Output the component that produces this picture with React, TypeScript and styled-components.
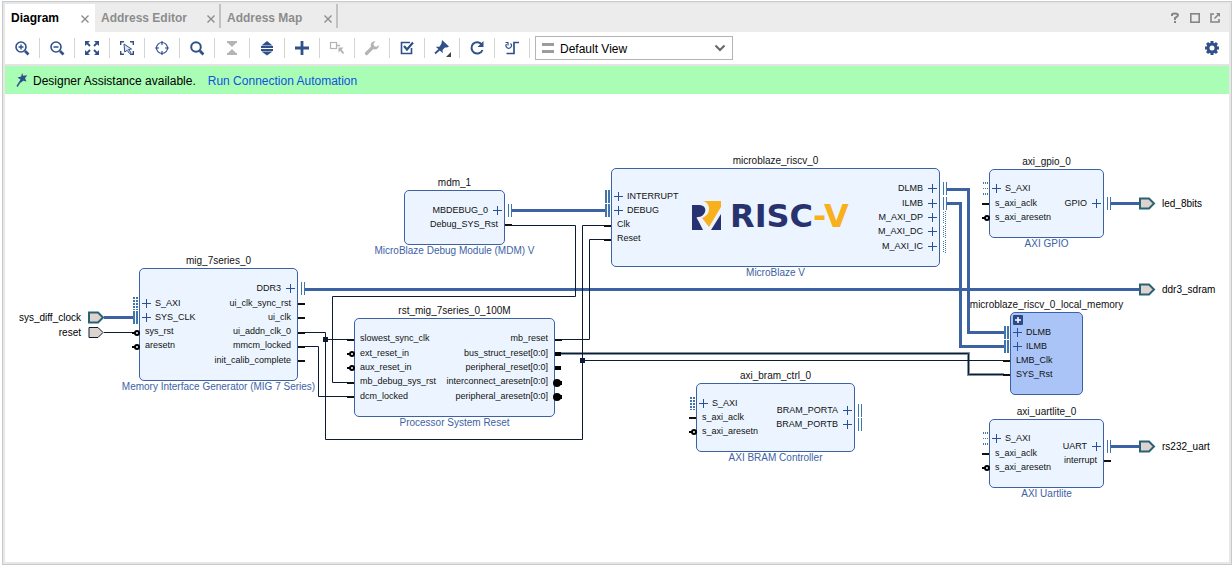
import React from "react";
import styled, { createGlobalStyle, css } from "styled-components";

const BLUE = "#3d62a4";
const BUS = "#3f76ad";
const DARK = "#0d1c33";
const ICON = "#30508a";

const GlobalStyle = createGlobalStyle`
  * { box-sizing: border-box; }
  body {
    margin: 0;
    background: #fff;
    color: #000;
    font-family: "Liberation Sans", Arial, sans-serif;
    font-size: 12px;
  }
`;

/* ---------- window frame ---------- */

const Page = styled.div`
  display: flex;
  min-height: 100vh;
  padding: 1px 0 1px 2px;
`;

const Frame = styled.main`
  flex: 1;
  min-width: 0;
  display: flex;
  flex-direction: column;
  border: 1px solid #c9cbcb;
  padding: 2px;
  background: #e7e7e7;
`;

const TabBar = styled.header`
  display: flex;
  height: 28px;
  background: #ececec;
`;

const Tab = styled.div<{ $width: number; $active?: boolean }>`
  display: flex;
  align-items: center;
  justify-content: space-between;
  width: ${(p) => p.$width}px;
  padding: 0 4px 0 6px;
  ${(p) =>
    p.$active
      ? css`
          padding-right: 6px;
          background: #fff;
          color: #000;
        `
      : css`
          height: 24px;
          padding-top: 4px;
          border-right: 2px solid #c2c2c2;
          color: #8c8c8c;
        `}
`;

const TabLabel = styled.button`
  border: 0;
  padding: 0;
  background: none;
  color: inherit;
  font: bold 12px "Liberation Sans", Arial, sans-serif;
`;

const CloseButton = styled.button`
  display: flex;
  border: 0;
  padding: 2px 0 0;
  background: none;
  color: #8c8c8c;
`;

const WindowButtons = styled.div`
  display: flex;
  align-items: center;
  gap: 4px;
  margin-left: auto;
  padding-right: 6px;
`;

const PlainButton = styled.button<{ $strong?: boolean }>`
  display: flex;
  border: 0;
  padding: 0;
  background: none;
  color: ${(p) => (p.$strong ? ICON : "#858585")};
`;

/* ---------- toolbar ---------- */

const Toolbar = styled.div`
  display: flex;
  align-items: center;
  height: 32px;
  padding-right: 9px;
  background: #fff;
`;

const ToolButton = styled.button<{ $muted?: boolean }>`
  display: flex;
  align-items: center;
  justify-content: center;
  width: 35px;
  height: 20px;
  border: 0;
  border-right: 1px solid #d4d4d4;
  padding: 0;
  background: none;
  color: ${(p) => (p.$muted ? "#b4b4b4" : ICON)};
`;

const ViewPicker = styled.label`
  display: grid;
  align-items: center;
  width: 198px;
  height: 24px;
  margin-left: 5px;
  margin-right: auto;
  > * {
    grid-area: 1 / 1;
  }
  > svg {
    pointer-events: none;
    margin: 0 7px;
  }
  > svg:last-child {
    justify-self: end;
  }
`;

const ViewSelect = styled.select`
  width: 100%;
  height: 100%;
  appearance: none;
  border: 1px solid #b4b4b4;
  border-radius: 0;
  padding: 2px 24px 0;
  background: #fff;
  color: #000;
  font: 12px "Liberation Sans", Arial, sans-serif;
`;

const Assistance = styled.div`
  display: flex;
  align-items: center;
  gap: 4px;
  height: 30px;
  border-top: 2px solid #e4e4e4;
  padding: 2px 8px 0;
  background: #aafdb4;
  svg {
    color: #30508a;
  }
`;

const AssistanceLink = styled.a`
  margin-left: 8px;
  color: #1152e0;
  text-decoration: none;
`;

/* ---------- diagram ---------- */

const Canvas = styled.section`
  position: relative;
  flex: 1;
  min-height: 440px;
  overflow: hidden;
  background: #fff;
`;

const WireLayer = styled.svg`
  position: absolute;
  inset: 0;
  width: 100%;
  height: 100%;
  pointer-events: none;
`;

const Block = styled.div<{ $x: number; $y: number; $w: number; $h: number; $hier?: boolean }>`
  position: absolute;
  left: ${(p) => p.$x - 5}px;
  top: ${(p) => p.$y - 94}px;
  width: ${(p) => p.$w}px;
  height: ${(p) => p.$h}px;
  border: 1px solid ${BLUE};
  border-radius: 5px;
  background: ${(p) => (p.$hier ? "#abc4f8" : "#ecf5ff")};
`;

const Caption = styled.div<{ $below?: boolean }>`
  position: absolute;
  left: 50%;
  transform: translateX(-50%);
  white-space: nowrap;
  font-size: 10px;
  line-height: 12px;
  ${(p) =>
    p.$below
      ? `top: 100%; padding-top: 1px; color: ${BLUE};`
      : "bottom: 100%; padding-bottom: 2px; color: #111;"}
`;

const PinLabel = styled.div<{ $y: number; $right?: boolean; $bus?: boolean }>`
  position: absolute;
  top: ${(p) => p.$y - 7}px;
  ${(p) => (p.$right ? "right" : "left")}: ${(p) => (p.$bus ? 2 : p.$right ? 6 : 5)}px;
  display: flex;
  flex-direction: ${(p) => (p.$right ? "row-reverse" : "row")};
  align-items: center;
  gap: ${(p) => (p.$right ? 5 : 4)}px;
  height: 12px;
  white-space: nowrap;
  font-size: 9px;
  line-height: 12px;
  color: #111;
`;

const PortLabel = styled.div<{ $x: number; $y: number; $end?: boolean }>`
  position: absolute;
  left: ${(p) => p.$x - 5}px;
  top: ${(p) => p.$y - 100}px;
  font-size: 10px;
  line-height: 12px;
  white-space: nowrap;
  ${(p) => p.$end && "transform: translateX(-100%);"}
`;

const Logo = styled.div`
  position: absolute;
  left: 80px;
  top: 32px;
  display: flex;
  align-items: center;
  gap: 8px;
`;

const Wordmark = styled.span`
  font: bold 32px "DejaVu Sans", sans-serif;
  line-height: 30px;
  color: #28326f;
  b {
    color: #f8b01c;
  }
`;

const Expander = styled.button`
  position: absolute;
  left: 2px;
  top: 2px;
  display: flex;
  border: 0;
  padding: 0;
  background: none;
`;

type Kind = "bus" | "dots" | "sparse" | "wire" | "vector" | "not" | "notvector";
interface Pin {
  label: string;
  y: number;
  kind: Kind;
  right?: boolean;
}
interface BlockData {
  name: string;
  type?: string;
  x: number;
  y: number;
  w: number;
  h: number;
  pins: Pin[];
}

const L = (label: string, y: number, kind: Kind = "wire"): Pin => ({ label, y, kind });
const R = (label: string, y: number, kind: Kind = "wire"): Pin => ({ label, y, kind, right: true });

const blocks: BlockData[] = [
  {
    name: "mdm_1", type: "MicroBlaze Debug Module (MDM) V", x: 404, y: 190, w: 101, h: 55,
    pins: [R("MBDEBUG_0", 20, "bus"), R("Debug_SYS_Rst", 34)],
  },
  {
    name: "mig_7series_0", type: "Memory Interface Generator (MIG 7 Series)", x: 139, y: 268, w: 159, h: 113,
    pins: [
      L("S_AXI", 35, "dots"), L("SYS_CLK", 49, "bus"), L("sys_rst", 63, "not"), L("aresetn", 77, "not"),
      R("DDR3", 20, "bus"), R("ui_clk_sync_rst", 35), R("ui_clk", 49), R("ui_addn_clk_0", 63),
      R("mmcm_locked", 77), R("init_calib_complete", 92),
    ],
  },
  {
    name: "rst_mig_7series_0_100M", type: "Processor System Reset", x: 354, y: 318, w: 201, h: 99,
    pins: [
      L("slowest_sync_clk", 20), L("ext_reset_in", 35, "not"), L("aux_reset_in", 49, "not"),
      L("mb_debug_sys_rst", 63), L("dcm_locked", 78),
      R("mb_reset", 20), R("bus_struct_reset[0:0]", 35, "vector"), R("peripheral_reset[0:0]", 49, "vector"),
      R("interconnect_aresetn[0:0]", 63, "notvector"), R("peripheral_aresetn[0:0]", 78, "notvector"),
    ],
  },
  {
    name: "microblaze_riscv_0", type: "MicroBlaze V", x: 611, y: 168, w: 329, h: 99,
    pins: [
      L("INTERRUPT", 28, "bus"), L("DEBUG", 42, "bus"), L("Clk", 56), L("Reset", 70),
      R("DLMB", 20, "bus"), R("ILMB", 35, "bus"), R("M_AXI_DP", 49, "dots"), R("M_AXI_DC", 63, "dots"), R("M_AXI_IC", 78, "dots"),
    ],
  },
  {
    name: "axi_gpio_0", type: "AXI GPIO", x: 989, y: 169, w: 115, h: 69,
    pins: [L("S_AXI", 19, "sparse"), L("s_axi_aclk", 34), L("s_axi_aresetn", 48, "not"), R("GPIO", 34, "bus")],
  },
  {
    name: "microblaze_riscv_0_local_memory", x: 1010, y: 312, w: 73, h: 83,
    pins: [L("DLMB", 20, "bus"), L("ILMB", 34, "bus"), L("LMB_Clk", 48), L("SYS_Rst", 62)],
  },
  {
    name: "axi_bram_ctrl_0", type: "AXI BRAM Controller", x: 696, y: 383, w: 159, h: 69,
    pins: [L("S_AXI", 20, "dots"), L("s_axi_aclk", 34), L("s_axi_aresetn", 48, "not"), R("BRAM_PORTA", 27, "bus"), R("BRAM_PORTB", 41, "bus")],
  },
  {
    name: "axi_uartlite_0", type: "AXI Uartlite", x: 989, y: 419, w: 115, h: 69,
    pins: [L("S_AXI", 19, "sparse"), L("s_axi_aclk", 34), L("s_axi_aresetn", 48, "not"), R("UART", 27, "bus"), R("interrupt", 41)],
  },
];

const busWires = [
  "M104 317.5H133",
  "M305 289.5H1139",
  "M512 210.5H605",
  "M946 189.5H968.5V332.5H1004",
  "M946 203.5H960.5V346.5H1004",
  "M1111 203.5H1139",
  "M1111 446.5H1139",
];

const wires = [
  "M104 332.5H134",
  "M305 332.5H325.5V439.5H582.5V225.5H605",
  "M325.5 339.5H347",
  "M305 346.5H318.5V396.5H347",
  "M512 225.5H575.5V296.5H332.5V382.5H347",
  "M561 339.5H589.5V239.5H605",
  "M582.5 360.5H1004",
];

const vectorWire = "M561 353.5H968.5V374.5H1004";

const wireRows: Record<number, number> = { 20: 21, 63: 64, 77: 78, 56: 57, 70: 71 };

function PinMark({ block, pin }: { block: BlockData; pin: Pin }) {
  const single = pin.kind !== "bus" && pin.kind !== "dots" && pin.kind !== "sparse";
  const row = single ? wireRows[pin.y] ?? pin.y : pin.y;
  const y = block.y + row + 1;
  const edge = pin.right ? block.x + block.w : block.x;
  const out = (d: number) => (pin.right ? edge + d : edge - d);
  switch (pin.kind) {
    case "bus":
      return pin.right ? (
        <path d={`M${edge + 3.5} ${y - 7}v13M${edge + 6.5} ${y - 7}v13`} stroke={BUS} fill="none" />
      ) : (
        <path d={`M${edge - 5} ${y - 7}v13M${edge - 2} ${y - 7}v13`} stroke={BUS} strokeWidth={2} fill="none" />
      );
    case "dots":
      return pin.right ? (
        <path d={`M${edge + 3.5} ${y - 6}v12M${edge + 5.5} ${y - 7}v13`} stroke={BUS} strokeDasharray="1 1" fill="none" />
      ) : (
        <path d={`M${edge - 5} ${y - 7}v13M${edge - 2} ${y - 7}v13`} stroke={BUS} strokeWidth={2} strokeDasharray="2 1" fill="none" />
      );
    case "sparse":
      return (
        <g stroke={BUS} strokeDasharray="1 1">
          <path d={`M${edge - 6} ${y - 6}h5M${edge - 6} ${y + 5}h5`} strokeWidth={2} />
          <path d={`M${edge - 6} ${y - 0.5}h5`} />
        </g>
      );
    case "wire":
      return <path d={`M${edge} ${y}H${out(7)}`} stroke="#111" strokeWidth={2} />;
    case "vector":
      return <path d={`M${edge} ${y}H${out(6)}`} stroke="#000" strokeWidth={4} />;
    case "not":
      return (
        <g stroke="#000" strokeWidth={2} fill="#fff">
          <path d={`M${out(7)} ${y}H${out(4)}`} />
          <circle cx={edge - 2} cy={y} r={2} />
        </g>
      );
    default:
      return (
        <g>
          <circle cx={edge + 2} cy={y} r={4} />
          <path d={`M${edge + 2} ${y}h5`} stroke="#000" strokeWidth={4} />
        </g>
      );
  }
}

function PortShape({ x, y, single }: { x: number; y: number; single?: boolean }) {
  return (
    <path
      d={`M${x + 1} ${y - 5}h9l5 5l-5 5h-9z`}
      fill="#ddd3cf"
      stroke={single ? DARK : "#2a6273"}
      strokeWidth={single ? 1 : 2}
    />
  );
}

const PlusMark = () => (
  <svg width="9" height="9" viewBox="0 0 9 9" stroke="#26509a" fill="none">
    <path d="M0 4.5H9M4.5 0V9" />
  </svg>
);

const Icon = ({ children, size = 16 }: { children: React.ReactNode; size?: number }) => (
  <svg width={size} height={size} viewBox={`0 0 ${size} ${size}`} fill="none" stroke="currentColor" strokeWidth="2" aria-hidden="true">
    {children}
  </svg>
);

const tools: { name: string; muted?: boolean; art: React.ReactNode }[] = [
  { name: "Zoom in", art: <><circle cx="7" cy="7" r="5" strokeWidth="1.6" /><path d="M4.5 7h5M7 4.5v5" strokeWidth="1.4" /><path d="M11 11l3.5 3.5" strokeWidth="2.6" /></> },
  { name: "Zoom out", art: <><circle cx="7" cy="7" r="5" strokeWidth="1.6" /><path d="M4.5 7h5" strokeWidth="1.5" /><path d="M11 11l3.5 3.5" strokeWidth="2.6" /></> },
  { name: "Zoom fit", art: <><path d="M2 2l4 4M14 2l-4 4M2 14l4-4M14 14l-4-4" strokeWidth="1.8" /><path d="M1 1h5l-5 5zM15 1h-5l5 5zM1 15h5l-5-5zM15 15h-5l5-5z" fill="currentColor" stroke="none" /></> },
  { name: "Select area", art: <><path d="M1.7 5V1.7H5M11 1.7h3.3V5M14.3 11v3.3H11M5 14.3H1.7V11" strokeWidth="1.4" /><path d="M5 4l7.5 5-3 .5 2.5 3-1.5 1-2.300-3.2L5.700 12z" strokeWidth="1" fill="#dce3f0" /></> },
  { name: "Center", art: <><circle cx="8" cy="8" r="5.5" strokeWidth="1.2" /><path d="M8 1v4M8 11v4M1 8h4M11 8h4" strokeWidth="1.2" /></> },
  { name: "Search", art: <><circle cx="7" cy="7" r="4.8" strokeWidth="2" /><path d="M10.8 10.8l3.6 3.6" strokeWidth="2.8" /></> },
  { name: "Collapse", muted: true, art: <><path d="M3 2h10M3 14h10" /><path d="M4 3h8L8 7zM4 13h8L8 9z" fill="currentColor" stroke="none" /></> },
  { name: "Expand", art: <><path d="M2 7h12M2 10h12" strokeWidth="1.8" /><path d="M2.5 5.5h11L8 1zM2.5 11.5h11L8 15.5z" fill="currentColor" stroke="none" /></> },
  { name: "Add IP", art: <path d="M1 8h14M8 1v14" strokeWidth="2.8" /> },
  { name: "Make external", muted: true, art: <><rect x="1.5" y="2.5" width="6" height="6" strokeWidth="1.2" /><path d="M8 5.500h3" strokeWidth="1.5" /><path d="M9.500 7.500h5l-5 5z" fill="currentColor" stroke="none" /><path d="M11 9l3.500 4.500" /></> },
  { name: "Customize", muted: true, art: <><path d="M2.500 13.500L9 7" strokeWidth="3.2" strokeLinecap="round" /><path d="M11.500 1.200a4.200 4.200 0 1 0 3.500 4l-2.600 1.600-2.400-.6-.5-2.400z" fill="currentColor" stroke="none" /></> },
  { name: "Validate", art: <><path d="M12.500 8v5.500h-10v-11H11" strokeWidth="1.6" /><path d="M5 6l3 3.500L14 2.500" strokeWidth="2.2" /></> },
  { name: "Pin", art: <><path d="M9 1l7 6.500-2 1-2 0-2.500 2.500.3 3.200-7-6.500 3.700 0L8.500 4.500z" fill="currentColor" stroke="none" /><path d="M2 14.500l5-4.500" strokeWidth="1.8" /><path d="M18 13v5h-5z" fill="#444" stroke="none" /></> },
  { name: "Regenerate", art: <><path d="M13 4.800A5.700 5.700 0 1 0 13.500 10" /><path d="M14.500 1v6h-6z" fill="currentColor" stroke="none" /></> },
  { name: "Optimize routing", art: <><path d="M6.500 3.500A2.700 2.700 0 1 1 2.500 4" strokeWidth="1.2" /><path d="M1.500 2.500H4v3" strokeWidth="1.2" /><path d="M2.500 13.500h7.500V2.500h5" strokeWidth="1.7" /></> },
];

const CloseIcon = () => (
  <Icon size={8}>
    <path d="M0.5 0.5l7 7M7.5 0.5l-7 7" strokeWidth="1.4" />
  </Icon>
);

const tabs = [
  { label: "Diagram", width: 90, active: true },
  { label: "Address Editor", width: 126 },
  { label: "Address Map", width: 117 },
];

const gearTeeth = [0, 45, 90, 135, 180, 225, 270, 315];

export default function App() {
  return (
    <Page>
      <GlobalStyle />
      <Frame>
        <TabBar>
          {tabs.map((t) => (
            <Tab key={t.label} $width={t.width} $active={t.active}>
              <TabLabel>{t.label}</TabLabel>
              <CloseButton aria-label={`Close ${t.label}`}><CloseIcon /></CloseButton>
            </Tab>
          ))}
          <WindowButtons>
            <PlainButton aria-label="Help">
              <Icon><path d="M5 6V4.500Q5 3.500 8 3.500T11 5Q11 6.500 8 8V10M8 11v2" /></Icon>
            </PlainButton>
            <PlainButton aria-label="Maximize">
              <Icon><rect x="3.800" y="3.800" width="8.400" height="8.400" strokeWidth="1.6" /></Icon>
            </PlainButton>
            <PlainButton aria-label="Float">
              <Icon><path d="M7 4H4v8h8V9" strokeWidth="1.6" /><path d="M7.500 8.500l4-4" strokeWidth="1.6" /><path d="M9 3h4v4z" fill="currentColor" stroke="none" /></Icon>
            </PlainButton>
          </WindowButtons>
        </TabBar>

        <Toolbar>
          {tools.map((t) => (
            <ToolButton key={t.name} aria-label={t.name} $muted={t.muted}>
              <Icon size={t.name === "Pin" ? 18 : 16}>{t.art}</Icon>
            </ToolButton>
          ))}
          <ViewPicker>
            <ViewSelect aria-label="View">
              <option>Default View</option>
            </ViewSelect>
            <svg width="12" height="10" fill="#9c9c9c"><path d="M0 0h12v3H0zM0 7h12v3H0z" /></svg>
            <svg width="12" height="8" fill="none" stroke="#666" strokeWidth="2"><path d="M1.500 1.500L6 6l4.500-4.500" /></svg>
          </ViewPicker>
          <PlainButton aria-label="Settings" $strong>
            <Icon>
              <circle cx="8" cy="8" r="4" strokeWidth="3" />
              {gearTeeth.map((a) => <path key={a} d="M8 3.500V1" strokeWidth="3" transform={`rotate(${a} 8 8)`} />)}
            </Icon>
          </PlainButton>
        </Toolbar>

        <Assistance>
          <Icon>
            <path d="M9 0l1.300 2.700 4-.4-2.300 3 1.500 3.200-3.300-.8L7.500 10V6.400L4.500 4.500l3.700-1z" fill="currentColor" stroke="none" />
            <path d="M8.500 6.500L4 13.500" strokeWidth="1.4" />
          </Icon>
          <span>Designer Assistance available.</span>
          <AssistanceLink href="#connection-automation">Run Connection Automation</AssistanceLink>
        </Assistance>

        <Canvas aria-label="Block diagram">
          {blocks.map((b) => (
            <Block key={b.name} $x={b.x} $y={b.y} $w={b.w} $h={b.h} $hier={!b.type}>
              <Caption>{b.name}</Caption>
              {b.pins.map((p) => {
                const bus = p.kind === "bus" || p.kind === "dots" || p.kind === "sparse";
                return (
                  <PinLabel key={p.label} $y={p.y} $right={p.right} $bus={bus}>
                    {bus && <PlusMark />}
                    <span>{p.label}</span>
                  </PinLabel>
                );
              })}
              {b.type && <Caption $below>{b.type}</Caption>}
              {!b.type && (
                <Expander aria-label="Expand hierarchy">
                  <svg width="10" height="10"><rect width="10" height="10" rx="1" fill="#2c4a86" /><path d="M2 5h6M5 2v6" stroke="#fff" strokeWidth="1.5" /></svg>
                </Expander>
              )}
              {b.name === "microblaze_riscv_0" && (
                <Logo>
                  <svg width="30" height="30" viewBox="0 0 30 30" aria-hidden="true">
                    <path d="M0 4h8c5 1 6 4 5 7-1 3-4 5-7 5l-2 1-4 0z" fill="#28326f" />
                    <path d="M0 15h3l11 14H10L0 29z" fill="#28326f" />
                    <path d="M5 17l3-1 9 13h-6z" fill="#ecf5ff" />
                    <path d="M11 0h18v6L17 26 10 17c5-2 7-5 7-9 0-4-2-7-6-8z" fill="#f8b01c" />
                    <path d="M29 13v16H19z" fill="#28326f" />
                  </svg>
                  <Wordmark>RISC<b>-V</b></Wordmark>
                </Logo>
              )}
            </Block>
          ))}

          <WireLayer aria-hidden="true">
            <g transform="translate(-5 -94)">
              <g fill="none" stroke={BLUE} strokeWidth={3}>{busWires.map((d) => <path key={d} d={d} />)}</g>
              <path d={vectorWire} fill="none" stroke="#8391a0" strokeWidth={3} />
              <path d={vectorWire} fill="none" stroke={DARK} />
              <g fill="none" stroke={DARK}>{wires.map((d) => <path key={d} d={d} />)}</g>
              <path d="M323 337h5v5h-5zM580 358h5v5h-5z" fill={DARK} />
              {blocks.map((b) => b.pins.map((p) => <PinMark key={b.name + p.label} block={b} pin={p} />))}
              <PortShape x={88} y={317.5} />
              <PortShape x={88} y={332.5} single />
              <PortShape x={1139} y={203.5} />
              <PortShape x={1139} y={289.5} />
              <PortShape x={1139} y={446.5} />
            </g>
          </WireLayer>

          <PortLabel $x={81} $y={318} $end>sys_diff_clock</PortLabel>
          <PortLabel $x={81} $y={333} $end>reset</PortLabel>
          <PortLabel $x={1162} $y={204}>led_8bits</PortLabel>
          <PortLabel $x={1162} $y={290}>ddr3_sdram</PortLabel>
          <PortLabel $x={1162} $y={447}>rs232_uart</PortLabel>
        </Canvas>
      </Frame>
    </Page>
  );
}
